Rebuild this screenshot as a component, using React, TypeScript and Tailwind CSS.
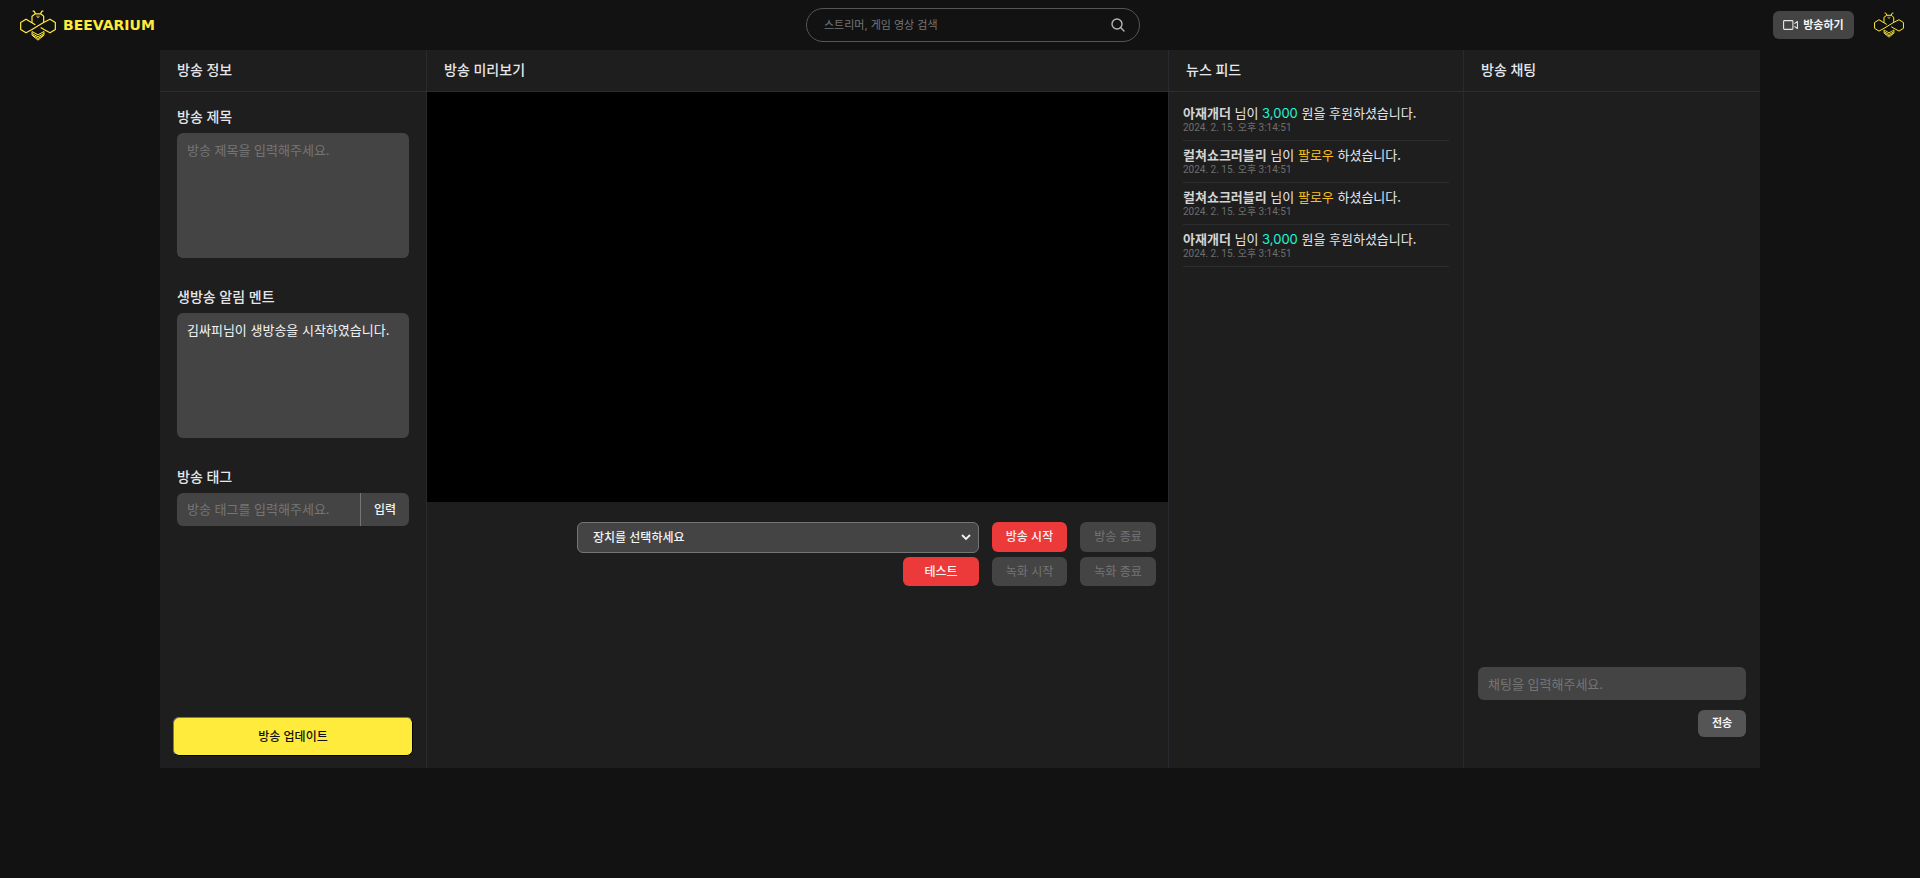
import React, { useState } from "react";

const fontStack = "font-['Inter','Noto_Sans_CJK_KR',sans-serif]";
const fieldBase =
  "w-full rounded-md bg-[#444444] px-[10px] text-[13px] text-gray-100 placeholder:text-[#757575] outline-none";

function Bee({ className }: { className: string }) {
  return (
    <svg viewBox="0 0 108 92" className={className} fill="none" stroke="#ffeb3b" strokeWidth="3.6" strokeLinejoin="round" aria-hidden="true">
      <path d="M46 44 L18 27 L2 37 V58 L18 68 L36 58 L72 36 L90 27 L106 37 V58 L90 68 L72 58 L62 52" />
      <path d="M36 38 V18 L46 11 H62 L71 18 V36" />
      <path d="M38 3 H42 L47 11 M70 3 H66 L61 11" />
      <path d="M48 18 H60 M51 22 H57" strokeWidth="2" />
      <path d="M36 64 L54 74 L72 64 V75 L54 90 L36 75 Z M36 70 L54 80 L72 70 M39 76 L54 85 L69 76" strokeWidth="3" />
    </svg>
  );
}

function SearchIcon() {
  return (
    <svg viewBox="0 0 14 14" className="size-[14px]" fill="none" stroke="#b5b5b5" strokeWidth="1.4" strokeLinecap="round" aria-hidden="true">
      <circle cx="6" cy="6" r="5" />
      <path d="M9.6 9.6 L13 13" />
    </svg>
  );
}

function CameraIcon() {
  return (
    <svg viewBox="0 0 16 10" className="h-[10px] w-4" fill="none" stroke="#e5e5e5" strokeWidth="1.1" strokeLinejoin="round" aria-hidden="true">
      <rect x="0.6" y="0.6" width="9.3" height="8.8" rx="0.8" />
      <path d="M11.4 3.6 L14.4 1.5 V8.5 L11.4 6.4" />
    </svg>
  );
}

function Header() {
  return (
    <header className="flex h-[50px] items-center justify-between pr-4 pl-5">
      <a href="#" className="flex items-center gap-[7px] pr-[18px]">
        <Bee className="h-[31px] w-9" />
        <span className="font-['DejaVu_Sans',sans-serif] text-sm leading-none font-bold text-[#ffeb3b]">BEEVARIUM</span>
      </a>
      <form className="flex h-[34px] w-[334px] items-center rounded-full border border-[#555555] pr-[14px] pl-[17px]" onSubmit={(e) => e.preventDefault()}>
        <input
          aria-label="검색"
          placeholder="스트리머, 게임 영상 검색"
          className="min-w-0 flex-1 bg-transparent text-[11px] text-gray-100 outline-none placeholder:text-[#757575]"
        />
        <button type="submit" aria-label="검색하기">
          <SearchIcon />
        </button>
      </form>
      <div className="flex items-center gap-5">
        <button className="flex h-7 w-[81px] items-center justify-center gap-1 rounded-md bg-[#444444] text-[11px] font-bold text-gray-100">
          <CameraIcon />
          방송하기
        </button>
        <button aria-label="내 프로필">
          <Bee className="h-[26px] w-[30px]" />
        </button>
      </div>
    </header>
  );
}

function Panel({ title, last, children }: { title: string; last?: boolean; children?: React.ReactNode }) {
  return (
    <section className={`flex min-w-0 flex-col ${last ? "" : "border-r border-[#272b30]"}`}>
      <h2 className="flex h-[42px] shrink-0 items-center border-b border-[#2d2e30] px-[17px] pb-[2px] text-sm font-medium text-gray-200">{title}</h2>
      {children}
    </section>
  );
}

function BroadcastInfo() {
  const [notice, setNotice] = useState("김싸피님이 생방송을 시작하였습니다.");
  const labelClass = "mb-[6px] block text-sm font-medium text-gray-200";
  return (
    <form className="flex flex-1 flex-col" onSubmit={(e) => e.preventDefault()}>
      <div className="flex flex-col gap-[29px] px-[17px] pt-[15px]">
        <div>
          <label htmlFor="title" className={labelClass}>방송 제목</label>
          <textarea id="title" placeholder="방송 제목을 입력해주세요." className={`${fieldBase} block h-[125px] resize-none py-2`} />
        </div>
        <div>
          <label htmlFor="notice" className={labelClass}>생방송 알림 멘트</label>
          <textarea
            id="notice"
            value={notice}
            onChange={(e) => setNotice(e.target.value)}
            className={`${fieldBase} block h-[125px] resize-none py-2`}
          />
        </div>
        <div>
          <label htmlFor="tag" className={labelClass}>방송 태그</label>
          <div className="flex h-[33px] overflow-hidden rounded-md bg-[#444444]">
            <input id="tag" placeholder="방송 태그를 입력해주세요." className="min-w-0 flex-1 px-[10px] text-[13px] text-gray-100 outline-none placeholder:text-[#757575]" />
            <button type="button" className="w-[49px] border-l border-[#757575] text-xs font-medium text-gray-100">입력</button>
          </div>
        </div>
      </div>
      <div className="mt-auto px-[13px] pb-3">
        <button className="h-[39px] w-full rounded-md border border-t-[#767676] border-r-black border-b-black border-l-[#767676] bg-[#ffeb3b] text-xs font-medium text-[#121212]">
          방송 업데이트
        </button>
      </div>
    </form>
  );
}

function Preview() {
  const active = "rounded-md bg-[#ec3a3a] text-xs font-medium text-gray-100";
  const disabled = "rounded-md bg-[#444444] text-xs text-[#757575]";
  return (
    <>
      <div className="aspect-[741/410] w-full bg-black" />
      <div className="flex flex-col gap-1 py-5 pr-3 pl-[150px]">
        <div className="flex gap-[13px]">
          <div className="relative flex-1">
            <select aria-label="장치" className="h-[31px] w-full appearance-none rounded-md border border-[#757575] bg-[#444444] px-[15px] text-xs font-medium text-gray-100">
              <option>장치를 선택하세요</option>
            </select>
            <svg viewBox="0 0 10 7" className="pointer-events-none absolute top-3 right-2 h-[7px] w-[10px]" fill="none" stroke="#f3f3f3" strokeWidth="1.8" aria-hidden="true">
              <path d="M1 1 L5 5 L9 1" />
            </svg>
          </div>
          <button className={`${active} h-[30px] w-[75px]`}>방송 시작</button>
          <button disabled className={`${disabled} h-[30px] w-[76px]`}>방송 종료</button>
        </div>
        <div className="flex justify-end gap-[13px]">
          <button className={`${active} h-[29px] w-[76px]`}>테스트</button>
          <button disabled className={`${disabled} h-[29px] w-[75px]`}>녹화 시작</button>
          <button disabled className={`${disabled} h-[29px] w-[76px]`}>녹화 종료</button>
        </div>
      </div>
    </>
  );
}

type Feed = { name: string; amount?: string };
const feeds: Feed[] = [
  { name: "아재개더", amount: "3,000" },
  { name: "컬쳐쇼크러블리" },
  { name: "컬쳐쇼크러블리" },
  { name: "아재개더", amount: "3,000" },
];

function NewsFeed() {
  return (
    <ul className="px-[14px] pt-[7px]">
      {feeds.map((feed, i) => (
        <li key={i} className="border-b border-[#2d2e30] pt-[5px] pb-[6px]">
          <p className="font-['Noto_Sans_CJK_KR',sans-serif] text-[13px] leading-[18px] text-gray-200">
            <strong className="font-bold text-[#d4d4d4]">{feed.name}</strong> 님이{" "}
            {feed.amount ? (
              <>
                <span className="font-['Inter',sans-serif] text-[#1df7d6]">{feed.amount}</span> 원을 후원하셨습니다.
              </>
            ) : (
              <>
                <span className="text-[#fbbf24]">팔로우</span> 하셨습니다.
              </>
            )}
          </p>
          <time className="block font-['Roboto','Noto_Sans_CJK_KR',sans-serif] text-[10px] leading-3 text-[#6e6e6e]">2024. 2. 15. 오후 3:14:51</time>
        </li>
      ))}
    </ul>
  );
}

function Chat() {
  return (
    <form className="mt-auto flex flex-col items-end gap-[10px] px-[14px] pb-[31px]" onSubmit={(e) => e.preventDefault()}>
      <input aria-label="채팅" placeholder="채팅을 입력해주세요." className={`${fieldBase} h-[33px]`} />
      <button className="h-[27px] w-12 rounded-md bg-[#555555] text-[11px] font-bold text-gray-100">전송</button>
    </form>
  );
}

export default function App() {
  return (
    <div className={`min-h-screen bg-[#121212] ${fontStack}`} lang="ko">
      <Header />
      <main className="mx-auto grid min-h-[718px] w-5/6 grid-cols-[267fr_742fr_295fr_296fr] bg-[#1e1e1e]">
        <Panel title="방송 정보">
          <BroadcastInfo />
        </Panel>
        <Panel title="방송 미리보기">
          <Preview />
        </Panel>
        <Panel title="뉴스 피드">
          <NewsFeed />
        </Panel>
        <Panel title="방송 채팅" last>
          <Chat />
        </Panel>
      </main>
    </div>
  );
}
